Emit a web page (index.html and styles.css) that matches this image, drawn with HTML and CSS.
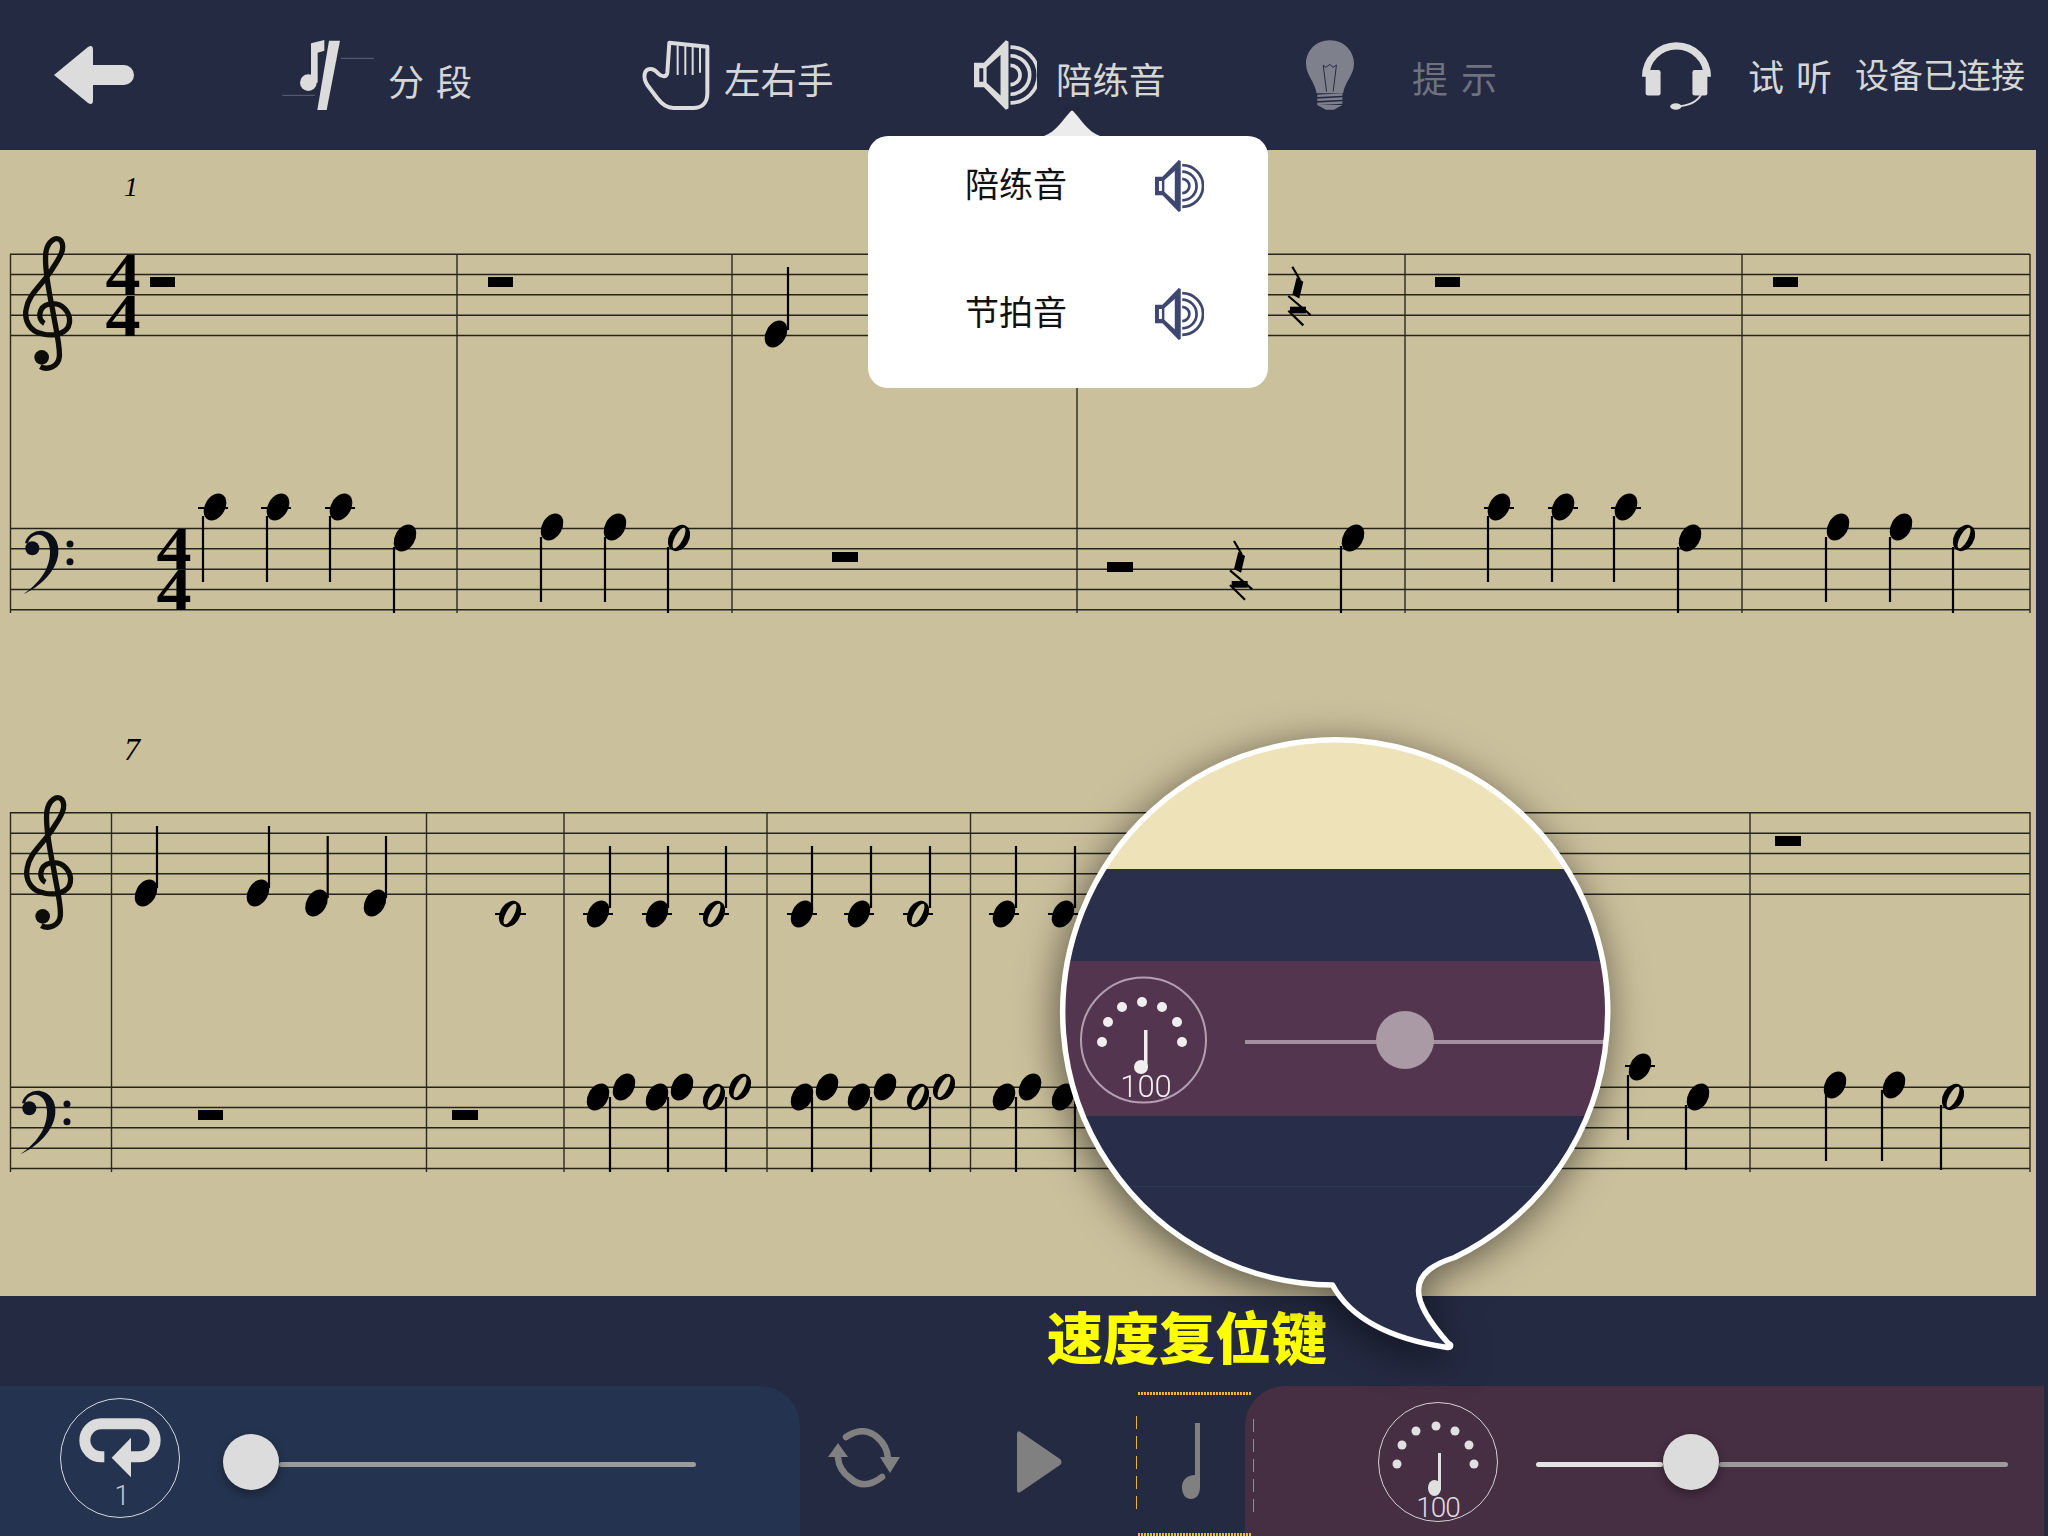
FILE: index.html
```html
<!DOCTYPE html>
<html lang="zh">
<head>
<meta charset="utf-8">
<title>陪练音</title>
<link rel="stylesheet" href="styles.css">
</head>
<body>
<svg class="defs" aria-hidden="true">
  <symbol id="spk" viewBox="1032 30 190 210">
    <path fill="currentColor" fill-rule="evenodd" d="M1032 98H1062L1128 30L1136 34V236L1128 240L1062 172H1032ZM1048 115V155H1060V115ZM1070 112V158L1112 197V74Z"/>
    <path fill="none" stroke="currentColor" stroke-width="11" d="M1142 51A84 84 0 0 1 1142 219M1142 77A58 58 0 0 1 1142 193M1142 106A29 29 0 0 1 1142 164"/>
  </symbol>
</svg>
<div class="app">
  <header class="topbar">
    <div class="tool">
      <svg class="ic-back" viewBox="0 0 80 58"><path d="M0 29L34 1Q39 -2 39 4V19H70A10 10 0 0 1 70 39H39V54Q39 60 34 57Z" fill="#dcdcdc"/></svg>
    </div>
    <div class="tool">
      <svg class="ic-seg" viewBox="0 0 360 270">
        <circle cx="115" cy="158" r="25" fill="#dcdcdc"/>
        <path d="M123 158V40L163 30V62L143 68V158Z" fill="#dcdcdc"/>
        <path d="M177 32H210L170 240H142Z" fill="#dcdcdc"/>
        <path d="M213 85H312M37 196H135" stroke="#5f6474" stroke-width="3"/>
      </svg>
      <span class="label label-seg">分 段</span>
    </div>
    <div class="tool">
      <svg class="ic-hand" viewBox="33 30 210 210">
        <path d="M44 132C48 112 70 112 84 130C96 142 110 142 112 128L118 38L232 50V190C232 220 215 234 190 234H130C110 234 95 222 82 205L52 165C44 152 42 142 44 132Z" fill="none" stroke="#dcdcdc" stroke-width="12" stroke-linejoin="round"/>
        <path d="M143 46V135M166 48V135M188 50V135M210 52V128" stroke="#dcdcdc" stroke-width="6"/>
      </svg>
      <span class="label label-hand">左右手</span>
    </div>
    <div class="tool">
      <svg class="ic-spk"><use href="#spk"/></svg>
      <span class="label label-spk">陪练音</span>
    </div>
    <div class="tool">
      <svg class="ic-bulb" viewBox="48 30 145 210">
        <path d="M120 30C165 30 193 65 193 100C193 135 165 155 160 190H80C75 155 48 135 48 100C48 65 75 30 120 30Z" fill="#7e808c"/>
        <path d="M82 198L158 194M82 210L158 206M82 222L158 218" stroke="#7e808c" stroke-width="7"/>
        <path d="M82 226H158L132 240H108Z" fill="#7e808c"/>
        <path d="M110 185L100 105L108 112L120 103L130 112L140 105L130 185" fill="none" stroke="#262b45" stroke-width="3"/>
      </svg>
      <span class="label label-hint">提 示</span>
    </div>
    <div class="tool">
      <svg class="ic-head" viewBox="1056 30 208 210">
        <path d="M1067 140A93 93 0 0 1 1253 140" fill="none" stroke="#dcdcdc" stroke-width="22"/>
        <rect x="1067" y="120" width="45" height="77" rx="7" fill="#dcdcdc"/>
        <rect x="1208" y="120" width="45" height="77" rx="7" fill="#dcdcdc"/>
        <path d="M1234 195Q1215 226 1160 230" fill="none" stroke="#dcdcdc" stroke-width="6"/>
        <ellipse cx="1158" cy="230" rx="17" ry="10" fill="#dcdcdc"/>
      </svg>
      <span class="label label-listen">试 听</span>
      <span class="label label-device">设备已连接</span>
    </div>
  </header>

  <main class="score">
    <svg class="sheet" viewBox="0 150 2036 1146">
      <defs>
        <ellipse id="q" rx="10" ry="14.5" transform="rotate(30)"/>
        <g id="h">
          <ellipse rx="10" ry="14" transform="rotate(30)"/>
          <ellipse rx="4" ry="11.5" transform="rotate(28)" fill="#cbc09c"/>
        </g>
        <g id="qr">
          <path d="M0 0L7.700 13.300M-4 29.300L18.300 48.300M-4 44L11 58.700" stroke="#000" stroke-width="2.200" fill="none"/>
          <path d="M4.300 10.700L11 15L7 31.700L0 28Z"/>
          <rect x="-2.300" y="40" width="16" height="6.700"/>
        </g>
        <g id="tc">
          <g transform="scale(.3333)">
            <path d="M130 490C110 480 110 440 145 432C185 425 210 460 205 490C200 520 160 530 125 522C85 515 70 480 75 450C82 400 125 375 155 325C175 295 195 265 180 242C165 225 140 245 135 275C128 320 145 400 155 450C165 510 178 560 175 590C172 620 140 632 118 620" fill="none" stroke="#0d0d0a" stroke-width="16"/>
            <circle cx="122" cy="592" r="22" fill="#0d0d0a"/>
          </g>
        </g>
        <g id="bc">
          <g transform="scale(.3333)">
            <path d="M75 1150C80 1125 105 1110 130 1113C160 1118 178 1145 175 1180C170 1235 120 1280 70 1303C115 1270 150 1230 150 1175C150 1140 130 1122 110 1125C95 1128 85 1140 85 1150Z" fill="#0b0f1a"/>
            <circle cx="97" cy="1165" r="21" fill="#0b0f1a"/>
            <circle cx="210" cy="1152" r="10.5" fill="#0b0f1a"/>
            <circle cx="210" cy="1205" r="10.5" fill="#0b0f1a"/>
          </g>
        </g>
      </defs>

      <path class="staff" d="M10 254.3H2030M10 274.5H2030M10 294.8H2030M10 315.2H2030M10 335.5H2030M10 528.5H2030M10 548.8H2030M10 569.2H2030M10 589.5H2030M10 609.8H2030"/>
      <path class="staff" d="M10 812.8H2030M10 833.2H2030M10 853.5H2030M10 873.8H2030M10 894.2H2030M10 1087.2H2030M10 1107.5H2030M10 1127.8H2030M10 1148.2H2030M10 1168.5H2030"/>
      <path class="bar" d="M10.5 254V613M457 254V613M732 254V613M1077 254V613M1405 254V613M1742 254V613M2030 254V613"/>
      <path class="bar" d="M10.5 812V1172M111.5 812V1172M426.5 812V1172M564 812V1172M767 812V1172M970.5 812V1172M1750 812V1172M2030 812V1172"/>

      <text class="measure m1" x="124" y="196">1</text>
      <text class="measure m7" x="124" y="760">7</text>

      <use href="#tc" x="1" y="160"/>
      <use href="#bc" x="0" y="160"/>
      <use href="#tc" x="2" y="719"/>
      <use href="#bc" x="-3" y="720"/>

      <text class="timesig" x="123" y="295" textLength="35" lengthAdjust="spacingAndGlyphs">4</text>
      <text class="timesig" x="123" y="335.5" textLength="35" lengthAdjust="spacingAndGlyphs">4</text>
      <text class="timesig" x="174" y="569" textLength="35" lengthAdjust="spacingAndGlyphs">4</text>
      <text class="timesig" x="174" y="609.5" textLength="35" lengthAdjust="spacingAndGlyphs">4</text>

      <g>
        <rect x="150" y="277" width="25" height="10"/><rect x="488" y="277" width="25" height="10"/>
        <rect x="1435" y="277" width="25" height="10"/><rect x="1773" y="277" width="25" height="10"/>
        <rect x="832" y="552" width="26" height="10"/><rect x="1107" y="562" width="26" height="10"/>
        <rect x="198" y="1110" width="25" height="10"/><rect x="452" y="1110" width="26" height="10"/>
        <rect x="1775" y="836" width="26" height="10"/>
      </g>
      <use href="#qr" x="1292.300" y="266.700"/>
      <use href="#qr" x="1234" y="541"/>

      <!-- stems -->
      <path class="stem" d="M788 267V330M203 516V582M267 516V582M330 516V582M394 547V613M541 537V602M605 537V602M668 547V613M1341 546V613M1488 516V582M1552 516V582M1614 516V582M1678 547V613M1826 537V602M1890 537V602M1953 547V613"/>
      <path class="stem" d="M157 826V888M269 826V888M327.7 836V898M386 836V898M610 846V908M668 846V908M726 846V908M812 846V908M871 846V908M930 846V908M1016 846V908M1075 846V908"/>
      <path class="stem" d="M610 1097V1172M668 1097V1172M726 1097V1172M812 1097V1172M871 1097V1172M930 1097V1172M1016 1097V1172M1075 1097V1172M1628 1075V1140M1686 1105V1170M1826 1090V1161M1882 1090V1161M1941 1105V1170"/>
      <path class="stem" d="M198 508H228M261 508H291M325 508H355M1484 508H1514M1548 508H1578M1611 508H1641M1625 1066H1655M495 914H526M583 914H613M642 914H672M699 914H729M787 914H817M844 914H874M903 914H933M989 914H1019M1048 914H1078"/>

      <!-- system 1 notes -->
      <use href="#q" x="776" y="334"/>
      <use href="#q" x="215" y="507"/><use href="#q" x="278" y="507"/><use href="#q" x="341" y="507"/><use href="#q" x="405" y="538"/>
      <use href="#q" x="552" y="527"/><use href="#q" x="615" y="527"/><use href="#h" x="679" y="538"/>
      <use href="#q" x="1353" y="538"/>
      <use href="#q" x="1499" y="507"/><use href="#q" x="1563" y="507"/><use href="#q" x="1626" y="507"/><use href="#q" x="1690" y="538"/>
      <use href="#q" x="1838" y="527"/><use href="#q" x="1901" y="527"/><use href="#h" x="1964" y="538"/>

      <!-- system 2 notes -->
      <use href="#q" x="146" y="893"/><use href="#q" x="258" y="893"/><use href="#q" x="316.5" y="903"/><use href="#q" x="375" y="903"/>
      <use href="#h" x="510" y="914"/>
      <use href="#q" x="598" y="914"/><use href="#q" x="657" y="914"/><use href="#h" x="714" y="914"/>
      <use href="#q" x="802" y="914"/><use href="#q" x="859" y="914"/><use href="#h" x="918" y="914"/>
      <use href="#q" x="1004" y="914"/><use href="#q" x="1063" y="914"/>
      <use href="#q" x="598" y="1097"/><use href="#q" x="624" y="1087"/><use href="#q" x="657" y="1097"/><use href="#q" x="682" y="1087"/><use href="#h" x="714" y="1097"/><use href="#h" x="740" y="1087"/>
      <use href="#q" x="802" y="1097"/><use href="#q" x="827" y="1087"/><use href="#q" x="859" y="1097"/><use href="#q" x="885" y="1087"/><use href="#h" x="918" y="1097"/><use href="#h" x="944" y="1087"/>
      <use href="#q" x="1004" y="1097"/><use href="#q" x="1030" y="1087"/><use href="#q" x="1063" y="1097"/>
      <use href="#q" x="1640" y="1067"/><use href="#q" x="1698" y="1097"/>
      <use href="#q" x="1835" y="1085"/><use href="#q" x="1894" y="1085"/><use href="#h" x="1953" y="1097"/>
    </svg>
  </main>

  <div class="hint"><span class="hint-text">速度复位键</span></div>

  <footer class="controls">
    <section class="panel panel-loop">
      <svg class="dial" viewBox="0 0 120 120">
        <circle cx="60" cy="60" r="59.5" fill="none" stroke="#d5d8de" stroke-width="1"/>
        <g transform="translate(-10 -8) scale(.3333)">
          <path d="M163 200.500H154A49.500 49.500 0 0 1 154 101.500H266A49.500 49.500 0 0 1 266 200.500H215" fill="none" stroke="#dcdcdc" stroke-width="33"/>
          <path d="M243 143V262L185 203Z" fill="#dcdcdc"/>
        </g>
        <text class="dial-num" x="62" y="107">1</text>
      </svg>
      <div class="slider slider-loop">
        <span class="thumb"></span>
        <span class="track track-off track-loop"></span>
      </div>
    </section>

    <section class="mid">
      <svg class="ic-refresh" viewBox="0 0 72 60">
        <path d="M18 9Q36 -3 50 10Q59 18 60 30M54 49Q36 63 22 50Q11 42 10 30" fill="none" stroke="#808080" stroke-width="6.500" stroke-linecap="round"/>
        <path d="M52 29H72L62 45ZM0 29H20L10 15Z" fill="#808080"/>
      </svg>
      <svg class="ic-play" viewBox="0 0 45 62"><path d="M0 3Q0 -2 5 2L43 28Q46 31 43 34L5 60Q0 64 0 59Z" fill="#808080"/></svg>
      <div class="tempo-note">
        <svg class="ic-quarter" viewBox="0 0 20 76"><path d="M14 0H19V64C19 72 15 76 10 76C4 76 1 71 1 64C1 57 6 52 14 52Z" fill="#808080"/></svg>
      </div>
    </section>

    <section class="panel panel-tempo">
      <svg class="dial dial-tempo" viewBox="0 0 120 120">
        <circle cx="60" cy="60" r="59.500" fill="none" stroke="#d5d0d6" stroke-width="1"/>
        <g fill="#e0e0e0">
          <circle cx="19" cy="62" r="4.500"/><circle cx="24" cy="43" r="4.500"/><circle cx="38" cy="29" r="4.500"/><circle cx="58" cy="24" r="4.500"/><circle cx="77" cy="29" r="4.500"/><circle cx="91" cy="43" r="4.500"/><circle cx="96" cy="62" r="4.500"/>
          <rect x="60" y="51" width="3" height="37"/>
          <ellipse cx="56.500" cy="86" rx="6.500" ry="8"/>
        </g>
        <text class="dial-num dial-100" x="60" y="115">100</text>
      </svg>
      <div class="slider slider-tempo">
        <span class="track track-on"></span>
        <span class="thumb"></span>
        <span class="track track-off track-rest"></span>
      </div>
    </section>
  </footer>

  <div class="popover">
    <svg class="popover-tip" viewBox="0 0 56 26"><path d="M0 26C12 22 20 8 27 1Q28 0 29 1C36 8 44 22 56 26Z" fill="#ececec"/></svg>
    <div class="pop-row"><span class="pop-text">陪练音</span><svg class="pop-spk"><use href="#spk"/></svg></div>
    <div class="pop-row"><span class="pop-text">节拍音</span><svg class="pop-spk"><use href="#spk"/></svg></div>
  </div>

  <svg class="bubble" viewBox="0 0 2048 1536">
    <defs>
      <clipPath id="bubble-clip"><path d="M1332.500 1285C1349.500 1316.500 1387.500 1338.500 1447.500 1347.500C1451.500 1347.500 1451.500 1344.500 1448.500 1343.500C1431.500 1324.500 1418.500 1304.500 1418.500 1290.500C1418.500 1272.500 1435.500 1263.500 1454.500 1257.500A272.500 272.500 0 1 0 1332.500 1285Z"/></clipPath>
    </defs>
    <path class="bubble-back" d="M1332.500 1285C1349.500 1316.500 1387.500 1338.500 1447.500 1347.500C1451.500 1347.500 1451.500 1344.500 1448.500 1343.500C1431.500 1324.500 1418.500 1304.500 1418.500 1290.500C1418.500 1272.500 1435.500 1263.500 1454.500 1257.500A272.500 272.500 0 1 0 1332.500 1285Z"/>
    <g clip-path="url(#bubble-clip)">
      <rect x="1050" y="730" width="570" height="139" fill="#eee2b8"/>
      <rect x="1050" y="869" width="570" height="92" fill="#2a2f4b"/>
      <rect x="1050" y="961" width="570" height="155" fill="#54354f"/>
      <rect x="1050" y="1186" width="570" height="1" fill="#2a3a50"/>
      <circle cx="1143.500" cy="1040" r="62.500" fill="none" stroke="#b39fb1" stroke-width="2"/>
      <g fill="#f1eef0">
        <circle cx="1102" cy="1042" r="5"/><circle cx="1108" cy="1022" r="5"/><circle cx="1122" cy="1007" r="5"/><circle cx="1142" cy="1002" r="5"/><circle cx="1162" cy="1007" r="5"/><circle cx="1177" cy="1022" r="5"/><circle cx="1182" cy="1042" r="5"/>
        <rect x="1144" y="1030" width="3.500" height="37"/>
        <circle cx="1141" cy="1067" r="7"/>
      </g>
      <text class="bubble-100" x="1146" y="1097">100</text>
      <rect x="1245" y="1040" width="380" height="4" fill="#a48fa0"/>
      <circle cx="1405" cy="1040" r="29" fill="#a99aa6"/>
    </g>
    <path class="bubble-line" d="M1332.500 1285C1349.500 1316.500 1387.500 1338.500 1447.500 1347.500C1451.500 1347.500 1451.500 1344.500 1448.500 1343.500C1431.500 1324.500 1418.500 1304.500 1418.500 1290.500C1418.500 1272.500 1435.500 1263.500 1454.500 1257.500A272.500 272.500 0 1 0 1332.500 1285Z"/>
  </svg>
</div>
</body>
</html>
```

FILE: styles.css
```css
* { box-sizing: border-box; }
html, body { margin: 0; padding: 0; }
body { background: #242a42; font-family: "Noto Sans CJK SC", "Noto Sans", sans-serif; }
svg { display: block; }
.defs { position: absolute; width: 0; height: 0; }

.app { position: relative; width: 2048px; height: 1536px; background: #242a42; overflow: hidden; }

/* top toolbar */
.topbar {
  height: 150px;
  display: grid;
  grid-template-columns: 216px 371px 333px 332px 336px 1fr;
  padding-left: 54px;
  align-items: center;
}
.tool { display: flex; align-items: center; height: 90px; }
.ic-back { width: 80px; height: 58px; }
.ic-seg { width: 120px; height: 90px; }
.ic-hand { width: 70px; height: 70px; }
.ic-spk { width: 63px; height: 70px; color: #dcdcdc; }
.ic-bulb { width: 48px; height: 70px; }
.ic-head { width: 69px; height: 70px; }

.label { font-size: 36px; line-height: 1; color: #d6d6d6; white-space: nowrap; font-weight: 400; }
.label-seg { margin-left: -2px; margin-top: 10px; word-spacing: 4px; }
.label-hand { margin-left: 13px; margin-top: 8px; font-size: 36.5px; }
.label-spk { margin-left: 19px; margin-top: 8px; font-size: 36.5px; }
.label-hint { margin-left: 58px; margin-top: 4px; color: #6f717e; word-spacing: 5px; }
.label-listen { margin-left: 37px; margin-top: -1px; word-spacing: 4px; }
.label-device { margin-left: 23px; margin-top: -3px; font-size: 34px; }

/* score */
.score { width: 2036px; height: 1146px; background: #cbc09c; }
.sheet { width: 2036px; height: 1146px; }
.staff { fill: none; stroke: #25241b; stroke-width: 1.5; }
.bar { fill: none; stroke: #2a2a22; stroke-width: 1.4; }
.stem { fill: none; stroke: #000; stroke-width: 2.2; }
.measure { font-family: "Liberation Serif", serif; font-style: italic; fill: #000; }
.m1 { font-size: 28px; }
.m7 { font-size: 32px; }
.timesig { font-family: "Liberation Serif", serif; font-weight: 700; font-size: 61px; text-anchor: middle; fill: #000; }

/* hint row */
.hint { height: 90px; padding: 7px 0 0 1047px; }
.hint-text { display: block; font-size: 56px; line-height: 64px; font-weight: 900; color: #ffff00; white-space: nowrap; }

/* bottom controls */
.controls { display: flex; height: 150px; }
.panel { height: 150px; display: flex; align-items: flex-start; }
.panel-loop { width: 800px; padding-left: 60px; background: #24334f; border-top-right-radius: 40px; }
.panel-tempo { width: 799px; padding-left: 133px; background: #462e43; border-top-left-radius: 40px; }
.mid { width: 445px; display: flex; align-items: flex-start; position: relative; z-index: 1; }

.dial { width: 120px; height: 120px; margin-top: 12px; flex: none; overflow: visible; }
.dial-tempo { margin-top: 16px; }
.dial-num { font-family: Roboto, "Liberation Sans", sans-serif; font-weight: 300; font-size: 27px; fill: #c9ccd2; text-anchor: middle; }
.dial-100 { font-size: 28px; fill: #e0dde0; letter-spacing: -1px; }

.slider { display: flex; align-items: center; margin-top: 48px; height: 56px; }
.slider-loop { margin-left: 43px; }
.slider-tempo { margin-left: 38px; }
.thumb { width: 56px; height: 56px; flex: none; border-radius: 50%; background: #dcdcdc; box-shadow: 0 4px 10px rgba(0, 0, 0, .35); position: relative; z-index: 1; }
.track { display: block; height: 5px; margin-top: 4px; border-radius: 3px; }
.track-off { background: #9b9b9b; }
.track-on { background: #e4e4e4; width: 127px; }
.track-loop { width: 417px; }
.track-rest { width: 289px; }

.ic-refresh { width: 72px; height: 60px; margin: 42px 0 0 28px; flex: none; }
.ic-play { width: 45px; height: 62px; margin: 45px 0 0 117px; flex: none; }
.tempo-note {
  width: 118px;
  height: 144px;
  margin: 6px 0 0 74px;
  flex: none;
  display: flex;
  justify-content: center;
  padding: 31px 8px 0 0;
  background:
    repeating-linear-gradient(90deg, #f5b91a 0 2px, transparent 2px 3px) center top / 114px 3px no-repeat,
    repeating-linear-gradient(90deg, #f5b91a 0 2px, transparent 2px 3px) center bottom / 114px 3px no-repeat,
    repeating-linear-gradient(180deg, #f0b429 0 13px, transparent 13px 20px) left 24px / 1px 93px no-repeat,
    repeating-linear-gradient(180deg, #8f8c94 0 13px, transparent 13px 20px) right 27px / 1px 93px no-repeat;
}
.ic-quarter { width: 20px; height: 76px; }

/* popover */
.popover {
  position: absolute;
  left: 868px;
  top: 136px;
  width: 400px;
  height: 252px;
  background: #fff;
  border-radius: 20px;
  padding-left: 97px;
  display: flex;
  flex-direction: column;
  gap: 32px;
}
.popover-tip { position: absolute; left: 176px; top: -26px; width: 56px; height: 26px; }
.pop-row { height: 96px; display: grid; grid-template-columns: 188px 51px; align-items: center; }
.pop-text { font-size: 34px; line-height: 1; margin-top: -2px; color: #111; white-space: nowrap; font-weight: 400; }
.pop-spk { width: 51px; height: 52px; color: #3f4770; margin-top: 4px; }

/* magnifier bubble */
.bubble { position: absolute; left: 0; top: 0; width: 2048px; height: 1536px; pointer-events: none; filter: drop-shadow(-3px 8px 20px rgba(0, 0, 0, .55)); }
.bubble-back { fill: #282e4a; }
.bubble-line { fill: none; stroke: #fff; stroke-width: 5.5; stroke-linejoin: round; }
.bubble-100 { font-family: Roboto, "Liberation Sans", sans-serif; font-weight: 300; font-size: 31px; fill: #f1eef0; text-anchor: middle; }
```
